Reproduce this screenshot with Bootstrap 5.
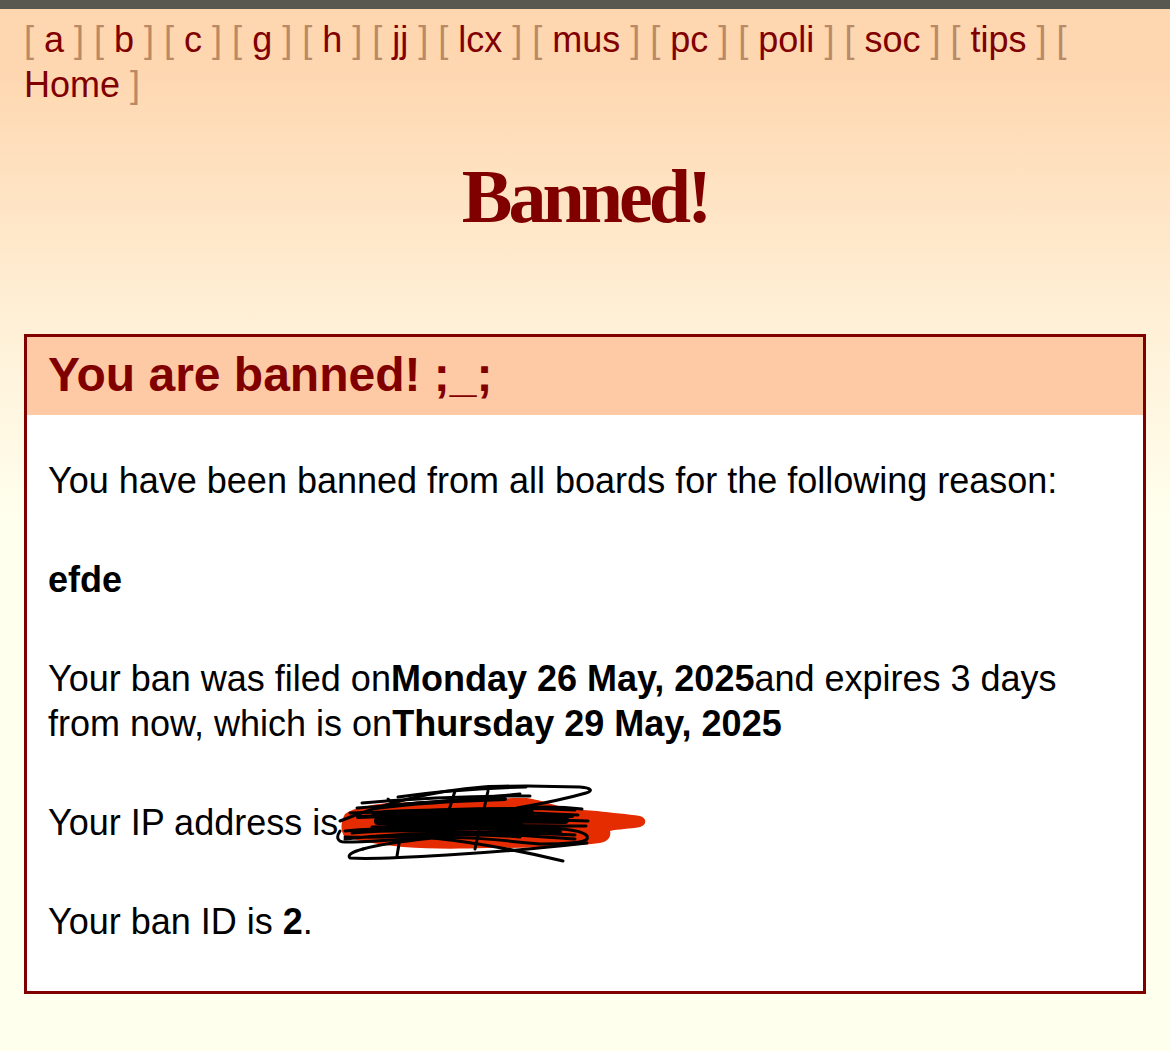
<!DOCTYPE html>
<html lang="en">
<head>
  <meta charset="UTF-8" />
  <title>Banned!</title>
  <meta name="viewport" content="width=device-width, initial-scale=1" />
  <link href="https://cdn.jsdelivr.net/npm/bootstrap@5.3.0/dist/css/bootstrap.min.css" rel="stylesheet" />
  <style>
    body {
      background: linear-gradient(to bottom, #fed6af 0, #fed6af 60px, #ffefd5 310px, #ffffee 520px) #ffffee no-repeat;
      background-size: 100% 560px;
      font-family: "Liberation Sans", Arial, sans-serif;
      font-size: 36px;
      line-height: 45px;
      color: #000;
      min-height: 1051px;
    }

    .top-strip {
      height: 9px;
      background: #585850;
    }

    .board-links {
      color: #b88a68;
      padding: 8px 24px 0;
    }

    .board-links a {
      color: #800000;
      text-decoration: none;
    }

    .page-title {
      font-family: "Liberation Serif", "Times New Roman", serif;
      font-size: 76px;
      font-weight: 700;
      letter-spacing: -4px;
      line-height: 90px;
      color: #800000;
      text-align: center;
      margin: 44px 0 0;
    }

    .ban-box {
      margin: 93px 24px 0;
      border: 3px solid #800000;
      background: #fff;
      height: 660px;
    }

    .ban-head {
      background: #fecaa6;
      color: #800000;
      font-size: 48px;
      font-weight: 700;
      line-height: 76px;
      height: 78px;
      padding: 0 21px;
      margin: 0;
    }

    .ban-body {
      padding: 43px 21px 0;
    }

    .ban-body p {
      margin: 0 0 54px;
    }

    .scribble-wrap {
      position: relative;
      display: inline-block;
      width: 0;
      height: 0;
    }

    .scribble {
      position: absolute;
      left: 0;
      top: -50px;
      width: 310px;
      height: 84px;
      overflow: visible;
    }
  </style>
</head>
<body>
  <div class="top-strip"></div>
  <div class="board-links">[ <a href="#">a</a> ] [ <a href="#">b</a> ] [ <a href="#">c</a> ] [ <a href="#">g</a> ] [ <a href="#">h</a> ] [ <a href="#">jj</a> ] [ <a href="#">lcx</a> ] [ <a href="#">mus</a> ] [ <a href="#">pc</a> ] [ <a href="#">poli</a> ] [ <a href="#">soc</a> ] [ <a href="#">tips</a> ] [ <a href="#">Home</a> ]</div>

  <h1 class="page-title">Banned!</h1>

  <div class="ban-box">
    <h2 class="ban-head">You are banned! ;_;</h2>
    <div class="ban-body">
      <p>You have been banned from all boards for the following reason:</p>
      <p><strong>efde</strong></p>
      <p>Your ban was filed on<strong>Monday 26 May, 2025</strong>and expires 3 days from now, which is on<strong>Thursday 29 May, 2025</strong></p>
      <p>Your IP address is<span class="scribble-wrap">
        <svg class="scribble" viewBox="338 784 310 84" fill="none">
          <path d="M345 813 C355 806 372 804 387 802 C430 800 490 797 527 797 C545 800 556 805 567 807 C578 809 588 809 597 810 C612 812 628 813 640 815 C647 817 647 824 640 826 C630 828 618 828 610 830 C611 834 610 840 600 842 C565 846 525 847 487 847 C455 848 430 848 403 846 C385 844 368 842 353 838 C348 837 344 836 343 833 C340 826 342 818 345 813 Z" fill="#e52b00" />
          <g stroke="#000" stroke-width="3" stroke-linecap="round" stroke-linejoin="round">
            <path d="M340 820 C385 802 430 790 483 786 C500 785 515 785 527 785 L580 786 C592 787 593 790 586 792 C565 798 540 803 517 807" />
            <path d="M398 796 C440 790 490 787 526 786 M357 807 C410 803 470 798 520 793 M373 813 C440 808 510 806 575 809 M380 822 C450 818 520 817 588 820" />
            <path d="M350 812 C420 809 500 810 578 814 M372 826 C440 824 510 824 586 825 M345 830 C420 824 500 828 570 825 M362 802 C410 798 470 795 530 795" />
            <path d="M340 830 C336 836 337 841 345 841 C400 841 470 830 540 828 C575 827 590 832 587 838 C584 842 570 843 540 843 C490 838 460 835 433 837 C405 840 380 843 363 848" />
            <path d="M363 848 C352 851 347 854 350 857 C380 859 500 852 587 842 M433 837 C480 842 530 852 563 860" />
            <path d="M345 838 C400 832 470 828 575 834 M352 832 C420 826 500 833 575 838 M345 836 C400 838 450 830 520 836 M520 807 C550 805 565 806 582 808" />
            <path d="M388 798 L393 803 M455 790 L443 828 M488 790 L475 848 M400 837 L397 855" />
          </g>
          <g stroke="#000" stroke-width="8" stroke-linecap="round">
            <path d="M385 813 C430 811 480 811 530 812 M378 820 C430 818 490 818 565 819 M390 827 C430 825 470 825 520 826" />
          </g>
          <g stroke="#000" stroke-width="4" stroke-linecap="round">
            <path d="M358 816 L385 815 M510 816 L572 815 M355 830 L390 828 M505 831 L560 831 M375 807 C420 801 470 799 505 798 M400 835 L470 833" />
          </g>
        </svg></span></p>
      <p class="mb-0">Your ban ID is <strong>2</strong>.</p>
    </div>
  </div>
</body>
</html>
